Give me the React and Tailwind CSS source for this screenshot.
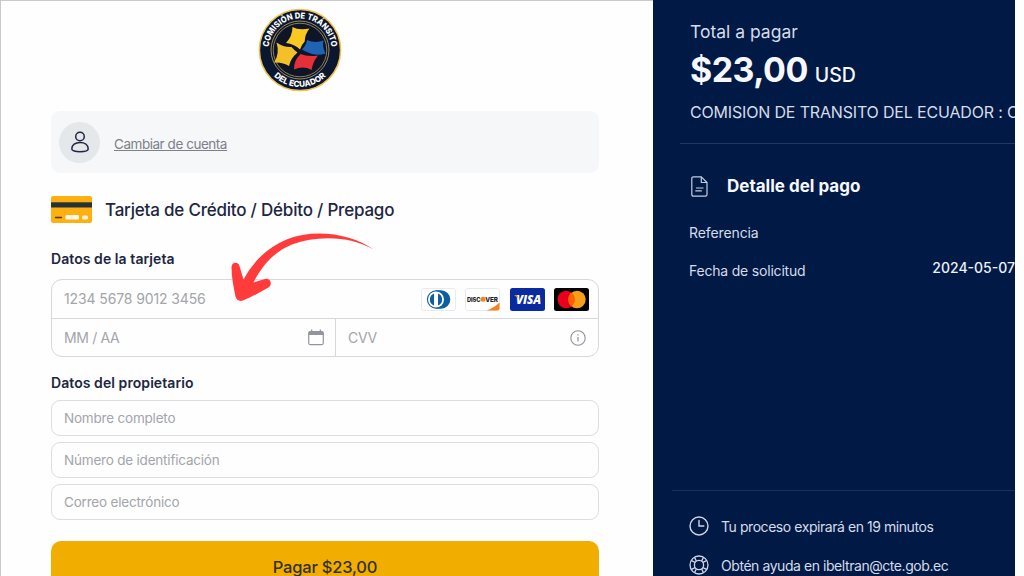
const Logo = () => (
  <svg viewBox="0 0 84 84" className="h-[84px] w-[84px]">
    <defs>
      <path id="seal-top" d="M10.500 42a31.500 31.500 0 0 1 63 0" />
      <path id="seal-bottom" d="M5 42a37 37 0 0 0 74 0" />
    </defs>
    <circle cx="42" cy="42" r="40.600" fill="#0b1730" stroke="#efc04a" strokeWidth="1.500" />
    <circle cx="42" cy="42" r="29" fill="none" stroke="#b09a5a" strokeWidth="0.900" />
    <circle cx="42" cy="42" r="26.800" fill="#0d1526" stroke="#b09a5a" strokeWidth="0.800" />
    <path d="M34.500 19q6 3.500 17 1.500q-4.500 5.500-4.800 13q-3 3-4.700 8q-5.500-5.500-14-6.500q6.500-7 6.500-16z" fill="#fac823" />
    <path d="M49 32q8 3.500 16.500.5q-1.500 6 2 13q-9 3-17.500-1q-3.500-1.500-6-3q4-4 5-9.500z" fill="#1d64b4" />
    <path d="M42.500 46q7 3 17.500 1.500q-5 6-6.500 14.500q-8-4.500-17.500-.5q-.5-8.500 6.500-15.500z" fill="#e5303a" />
    <path d="M18.500 34.500q7.500 5 15 4.500q3 3.500 6 5.500q-7 6-8.500 13.500q-6-4-15-3.500q6-9 2.500-20z" fill="#f3c02a" />
    <g fill="#fff" fontFamily="Inter, sans-serif" fontWeight="800">
      <text fontSize="8.400">
        <textPath href="#seal-top" startOffset="50%" textAnchor="middle" textLength="93" lengthAdjust="spacingAndGlyphs">COMISIÓN DE TRÁNSITO</textPath>
      </text>
      <text fontSize="8.200">
        <textPath href="#seal-bottom" startOffset="50%" textAnchor="middle" textLength="58" lengthAdjust="spacingAndGlyphs">DEL ECUADOR</textPath>
      </text>
    </g>
  </svg>
)

const UserIcon = () => (
  <svg viewBox="0 0 20 22" className="h-[22px] w-5" fill="none" stroke="#20263f" strokeWidth="1.5">
    <circle cx="10" cy="5.500" r="4.300" />
    <path d="M1.800 18c0-4.200 3.600-6.500 8.200-6.500s8.200 2.300 8.200 6.500c0 1.800-3.600 2.700-8.200 2.700S1.800 19.800 1.800 18z" />
  </svg>
)

const CreditCardIcon = () => (
  <svg viewBox="0 0 41 27" className="h-[27px] w-[41px]">
    <rect width="41" height="27" rx="2" fill="#fdb010" />
    <rect y="6.300" width="41" height="5.200" fill="#263238" />
    <path d="M4.500 21.500h6" stroke="#4a3a18" strokeWidth="1.300" strokeLinecap="round" />
    <rect x="14.500" y="19" width="13.500" height="4.500" rx="1" fill="#fff8e6" />
    <rect x="31" y="19.500" width="6" height="4" rx="1.500" fill="#fff3d0" />
  </svg>
)

const DinersIcon = () => (
  <svg viewBox="0 0 35 23" className="h-[23px] w-[35px]">
    <rect x="0.500" y="0.500" width="34" height="22" rx="2.500" fill="#fff" stroke="#e8eaed" />
    <path d="M15 2.200h5a9.200 9.200 0 0 1 0 18.600h-5z" fill="#0f5f9f" />
    <circle cx="15.200" cy="11.500" r="9.300" fill="#0f5f9f" />
    <circle cx="15" cy="11.500" r="8" fill="#fff" />
    <path d="M13 5.600a6.300 6.300 0 0 0 0 11.800zM17 5.600a6.300 6.300 0 0 1 0 11.800z" fill="#0f5f9f" />
  </svg>
)

const DiscoverIcon = () => (
  <svg viewBox="0 0 35 23" className="h-[23px] w-[35px]">
    <rect x="0.500" y="0.500" width="34" height="22" rx="2.500" fill="#fff" stroke="#e8eaed" />
    <path d="M34.500 14.500v5.500a2.500 2.500 0 0 1-2.500 2.500H21.500q8-3 13-8z" fill="#f58220" />
    <g fill="#222" fontFamily="Inter, sans-serif" fontWeight="800" fontSize="6.400">
      <text x="2" y="13.500" textLength="13.500" lengthAdjust="spacingAndGlyphs">DISC</text>
      <text x="20.200" y="13.500" textLength="12.600" lengthAdjust="spacingAndGlyphs">VER</text>
    </g>
    <circle cx="18" cy="11.200" r="2.500" fill="#f58220" />
  </svg>
)

const VisaIcon = () => (
  <svg viewBox="0 0 35 23" className="h-[23px] w-[35px]">
    <rect width="35" height="23" rx="2.500" fill="#0a2aa0" />
    <text x="6" y="15.800" fill="#fff" fontFamily="Open Sans, sans-serif" fontStyle="italic" fontWeight="800" fontSize="12" textLength="25" lengthAdjust="spacingAndGlyphs">VISA</text>
    <path d="M3.800 7.200h3.700l1.300 3.600q-2-2.600-5-3.600z" fill="#f5a623" />
  </svg>
)

const MastercardIcon = () => (
  <svg viewBox="0 0 35 23" className="h-[23px] w-[35px]">
    <rect width="35" height="23" rx="2.500" fill="#000" />
    <circle cx="12.200" cy="11.500" r="8.700" fill="#eb001b" />
    <circle cx="23" cy="11.500" r="8.700" fill="#f79e1b" />
    <path d="M17.600 4.700a8.700 8.700 0 0 1 0 13.600a8.700 8.700 0 0 1 0-13.600z" fill="#ff5f00" />
  </svg>
)

const CalendarIcon = () => (
  <svg viewBox="0 0 16 17" className="h-[17px] w-4">
    <rect x="0.700" y="2.600" width="14.600" height="13" rx="1.500" fill="none" stroke="#91959d" strokeWidth="1.200" />
    <path d="M0.700 6V4q0-1.400 1.400-1.400h11.800q1.400 0 1.400 1.400v2zM3 .6h1.300v2.500H3zM11.700.6H13v2.500h-1.300z" fill="#91959d" />
  </svg>
)

const InfoIcon = () => (
  <svg viewBox="0 0 16 16" className="h-4 w-4" fill="none" stroke="#8d929b" strokeWidth="1.100">
    <circle cx="8" cy="8" r="7.200" />
    <path d="M8 7v4.500M8 4.200v1.300" strokeWidth="1.200" />
  </svg>
)

const DocumentIcon = () => (
  <svg viewBox="0 0 18 21" className="h-[21px] w-[18px]" fill="none" stroke="#c5cde0" strokeWidth="1.200" strokeLinejoin="round">
    <path d="M3.500.8h7.800l5.700 5.700v12q0 1.700-1.700 1.700H3.500q-1.700 0-1.700-1.700v-16Q1.800.800 3.500.8z" />
    <path d="M11.300.8v5.700H17M6 12h7.500M5.300 14.800h6.500" />
  </svg>
)

const ClockIcon = () => (
  <svg viewBox="0 0 20 20" className="h-5 w-5" fill="none" stroke="#cfd6e6" strokeWidth="1.400" strokeLinecap="round">
    <circle cx="10" cy="10" r="9" />
    <path d="M10 4.500V10h4.800" />
  </svg>
)

const HelpIcon = () => (
  <svg viewBox="0 0 20 20" className="h-5 w-5" fill="none" stroke="#cfd6e6" strokeWidth="1.300">
    <circle cx="10" cy="10" r="9" />
    <circle cx="10" cy="10" r="4.600" />
    <path d="M5.600 2.400l1.800 3.800M2.400 5.600l3.800 1.800M14.400 2.400l-1.800 3.800M17.600 5.600l-3.800 1.800M5.600 17.600l1.800-3.800M2.400 14.400l3.800-1.800M14.400 17.600l-1.800-3.800M17.600 14.400l-3.800-1.800" />
  </svg>
)

const Arrow = () => (
  <svg viewBox="0 0 150 76" className="absolute left-[228px] top-[227.500px] h-[76px] w-[150px]" fill="#ff3b3b">
    <path d="M145.500 21.500C124 6 87 0 58.500 11.500C37 20.500 24 36 15.500 51.500L11.500 38c-1.300-5-8-3.800-8 1c0 10 2 20 4 29.500c.8 3.500 4 5.200 7.500 4c9-3.500 17-8.500 25.500-13c4.500-3 2-9.800-3.500-8.600L25.500 54.500C36 34 49 22.500 64 16.500C90 6.500 124 8.500 145.500 21.500z" />
  </svg>
)

const ownerFields = ['Nombre completo', 'Número de identificación', 'Correo electrónico']

const Field = ({ label }) => (
  <div className="flex h-9 items-center rounded-[9px] border border-[#dcdde0] px-3 text-[13.5px] tracking-[-0.2px] text-[#a3a5aa]">
    {label}
  </div>
)

const PaymentForm = () => (
  <main className="h-full w-[653px] shrink-0 border-l border-t border-[#c9cacc] bg-[#fefefe] pl-[50px] pr-[54px] pt-[7px]">
    <div className="flex justify-center pr-[50px]">
      <Logo />
    </div>

    <div className="mt-[19px] flex h-[62px] items-center rounded-[9px] bg-[#f5f7f8] pl-2">
      <div className="flex h-[41px] w-[41px] items-center justify-center rounded-full bg-[#e4e8eb]">
        <UserIcon />
      </div>
      <a className="ml-3.5 pt-1 text-[13.5px] tracking-[-0.46px] text-[#7d8088] underline">Cambiar de cuenta</a>
    </div>

    <div className="mt-[23px] flex h-[27px] items-center gap-[13px]">
      <CreditCardIcon />
      <h1 className="pt-[3px] text-[17px] font-medium tracking-[-0.21px]">Tarjeta de Crédito / Débito / Prepago</h1>
    </div>

    <h2 className="mt-[26px] text-sm font-semibold leading-5 tracking-[0.07px]">Datos de la tarjeta</h2>
    <div className="mt-2.5 h-[78px] rounded-[11px] border border-[#d7d8dc] text-sm tracking-[-0.12px] text-[#a3a5aa]">
      <div className="flex h-[39px] items-center justify-between border-b border-[#d7d8dc] pl-3 pr-[9px]">
        <span>1234 5678 9012 3456</span>
        <div className="flex gap-[9.500px]">
          <DinersIcon />
          <DiscoverIcon />
          <VisaIcon />
          <MastercardIcon />
        </div>
      </div>
      <div className="flex h-[37px] tracking-[-0.35px]">
        <div className="flex w-[284px] items-center justify-between border-r border-[#d7d8dc] pl-3 pr-[11px]">
          <span>MM / AA</span>
          <CalendarIcon />
        </div>
        <div className="flex flex-1 items-center justify-between pl-3 pr-3">
          <span>CVV</span>
          <InfoIcon />
        </div>
      </div>
    </div>

    <h2 className="mt-4 text-sm font-semibold leading-5 tracking-[0.07px]">Datos del propietario</h2>
    <div className="mt-[7px] flex flex-col gap-1.5">
      {ownerFields.map((label) => (
        <Field key={label} label={label} />
      ))}
    </div>

    <button className="mt-[21px] h-[50px] w-full rounded-[10px] bg-[#f2ae00] pt-0.5 text-[16.500px] font-medium tracking-[-0.2px] text-[#33301f]">
      Pagar $23,00
    </button>
  </main>
)

const Summary = () => (
  <aside className="flex h-full w-[362px] shrink-0 flex-col overflow-hidden whitespace-nowrap bg-[#001945] text-[#d6dcea]">
    <div className="pl-[37px] pt-5">
      <p className="text-[17.500px] leading-6">Total a pagar</p>
      <div className="mt-1.5 flex h-10 items-baseline gap-[7px] text-[#f6f8fd]">
        <span className="text-[34px] font-bold leading-10 tracking-[-0.55px]">$23,00</span>
        <span className="text-[19.500px] font-medium">USD</span>
      </div>
      <p className="mt-2.5 text-base leading-6 tracking-[-0.17px]">COMISION DE TRANSITO DEL ECUADOR : C</p>
    </div>

    <div className="ml-[27px] mt-[19px] border-t border-[#233962]" />

    <div className="ml-[37px] mt-8 flex h-[21px] items-center gap-[19px]">
      <DocumentIcon />
      <h2 className="text-[17px] font-bold text-[#f6f8fd]">Detalle del pago</h2>
    </div>
    <div className="ml-9 mt-[26px] text-sm leading-5">
      <p className="tracking-[-0.1px]">Referencia</p>
      <div className="mt-[18px] flex justify-between">
        <span className="tracking-[-0.2px]">Fecha de solicitud</span>
        <span className="-mt-[3px] font-medium text-[#eef1f8]">2024-05-07</span>
      </div>
    </div>

    <div className="ml-[19px] mt-[209px] border-t border-[#1a3058]" />

    <div className="ml-9 mt-[25px] flex flex-col gap-[19px] text-sm tracking-[-0.44px]">
      <div className="flex h-5 items-center gap-3">
        <ClockIcon />
        <span className="pt-0.5">Tu proceso expirará en 19 minutos</span>
      </div>
      <div className="flex h-5 items-center gap-3">
        <HelpIcon />
        <span className="pt-0.5">Obtén ayuda en ibeltran@cte.gob.ec</span>
      </div>
    </div>
  </aside>
)

export default function App() {
  return (
    <div className="relative flex h-[576px] w-[1024px] overflow-hidden bg-white font-['Inter',sans-serif] text-[#20263f]">
      <PaymentForm />
      <Summary />
      <Arrow />
    </div>
  )
}
